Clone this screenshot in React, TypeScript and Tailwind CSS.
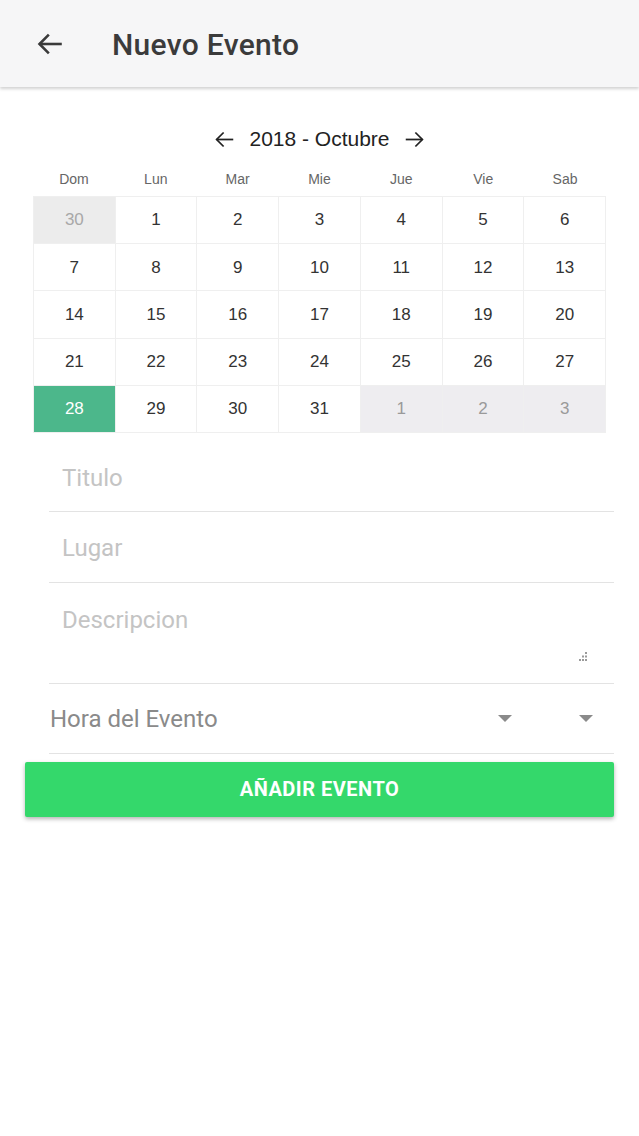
import React from "react";

const weekdays = ["Dom", "Lun", "Mar", "Mie", "Jue", "Vie", "Sab"];

type Cell = { d: number; kind: "prev" | "cur" | "next" | "sel" };

function buildCells(): Cell[] {
  const cells: Cell[] = [{ d: 30, kind: "prev" }];
  for (let i = 1; i <= 31; i++) cells.push({ d: i, kind: i === 28 ? "sel" : "cur" });
  for (let i = 1; i <= 3; i++) cells.push({ d: i, kind: "next" });
  return cells;
}

const Arrow = ({ dir, size = 20, stroke = 2 }: { dir: "left" | "right"; size?: number; stroke?: number }) => (
  <svg width={size} height={size} viewBox="0 0 24 24" fill="none" stroke="currentColor" strokeWidth={stroke} strokeLinecap="square">
    {dir === "left" ? (
      <>
        <path d="M21 12H4" />
        <path d="M11 4l-8 8 8 8" strokeLinecap="butt" strokeLinejoin="miter" />
      </>
    ) : (
      <>
        <path d="M3 12h17" />
        <path d="M13 4l8 8-8 8" strokeLinecap="butt" strokeLinejoin="miter" />
      </>
    )}
  </svg>
);

const Caret = () => (
  <svg width="14" height="8" viewBox="0 0 14 8">
    <path d="M0 0h14L7 7z" fill="#8a8a8a" />
  </svg>
);

export default function App() {
  const cells = buildCells();
  return (
    <div className="min-h-[1136px] bg-white" style={{ fontFamily: "Roboto, 'Liberation Sans', sans-serif" }}>
      <header className="h-[87px] bg-[#f6f6f7] flex items-center shadow-[0_2px_3px_rgba(0,0,0,0.18)] relative z-10">
        <div className="w-[112px] pl-[36px] text-[#3a3a3a]">
          <Arrow dir="left" size={28} stroke={2.2} />
        </div>
        <h1 className="text-[30px] font-medium text-[#3b3b3b] tracking-[0.3px] pt-[2px]">Nuevo Evento</h1>
      </header>

      <div className="px-[33px] pt-[38px]" style={{ fontFamily: "'Liberation Sans', Arial, sans-serif" }}>
        <div className="flex items-center justify-center gap-[14px] text-[#222] text-[21px] h-[28px]">
          <Arrow dir="left" size={21} stroke={2} />
          <span>2018 - Octubre</span>
          <Arrow dir="right" size={21} stroke={2} />
        </div>
        <div className="grid grid-cols-7 mt-[12px] h-[28px] items-center text-[14px] text-[#666]">
          {weekdays.map((w) => (
            <div key={w} className="text-center">{w}</div>
          ))}
        </div>
        <div className="grid grid-cols-7 mt-[3px] border-l border-t border-[#efefef] w-[573px]">
          {cells.map((c, i) => {
            const base = "h-[47.2px] flex items-center justify-center text-[17px] border-r border-b border-[#efefef]";
            const cls =
              c.kind === "prev"
                ? "bg-[#ececec] text-[#a8a8a8]"
                : c.kind === "next"
                ? "bg-[#eeedf0] text-[#9a9a9a]"
                : c.kind === "sel"
                ? "bg-[#4cb78b] text-white"
                : "bg-white text-[#333]";
            return (
              <div key={i} className={`${base} ${cls}`}>
                {c.d}
              </div>
            );
          })}
        </div>
      </div>

      <div className="pl-[49px] pr-[25px] text-[24px]">
        <div className="h-[79px] border-b border-[#e3e3e3] flex items-center pl-[13px] pt-[12px] text-[#c4c4c4]">Titulo</div>
        <div className="h-[71px] border-b border-[#e3e3e3] flex items-center pl-[13px] pt-[2px] text-[#c4c4c4]">Lugar</div>
        <div className="h-[101px] border-b border-[#e3e3e3] relative pl-[13px] pt-[19px] text-[#c4c4c4]">
          Descripcion
          <svg className="absolute right-[26px] bottom-[21px]" width="10" height="10" viewBox="0 0 10 10">
            <g fill="#9a9a9a">
              <rect x="7" y="0" width="2" height="2" />
              <rect x="4" y="3.5" width="2" height="2" />
              <rect x="7" y="3.5" width="2" height="2" />
              <rect x="1" y="7" width="2" height="2" />
              <rect x="4" y="7" width="2" height="2" />
              <rect x="7" y="7" width="2" height="2" />
            </g>
          </svg>
        </div>
        <div className="h-[70px] border-b border-[#e3e3e3] flex items-center pt-[2px] text-[#8a8a8a]">
          <span className="flex-1 pl-[1px]">Hora del Evento</span>
          <span className="mr-[67px]"><Caret /></span>
          <span className="mr-[21px]"><Caret /></span>
        </div>
      </div>

      <div className="pl-[25px] pr-[25px] pt-[8px]">
        <button className="w-full h-[55px] bg-[#34d86b] text-white text-[20px] font-bold rounded-[2px] shadow-[0_2px_4px_rgba(0,0,0,0.3)] tracking-[0.5px]">
          AÑADIR EVENTO
        </button>
      </div>
    </div>
  );
}
